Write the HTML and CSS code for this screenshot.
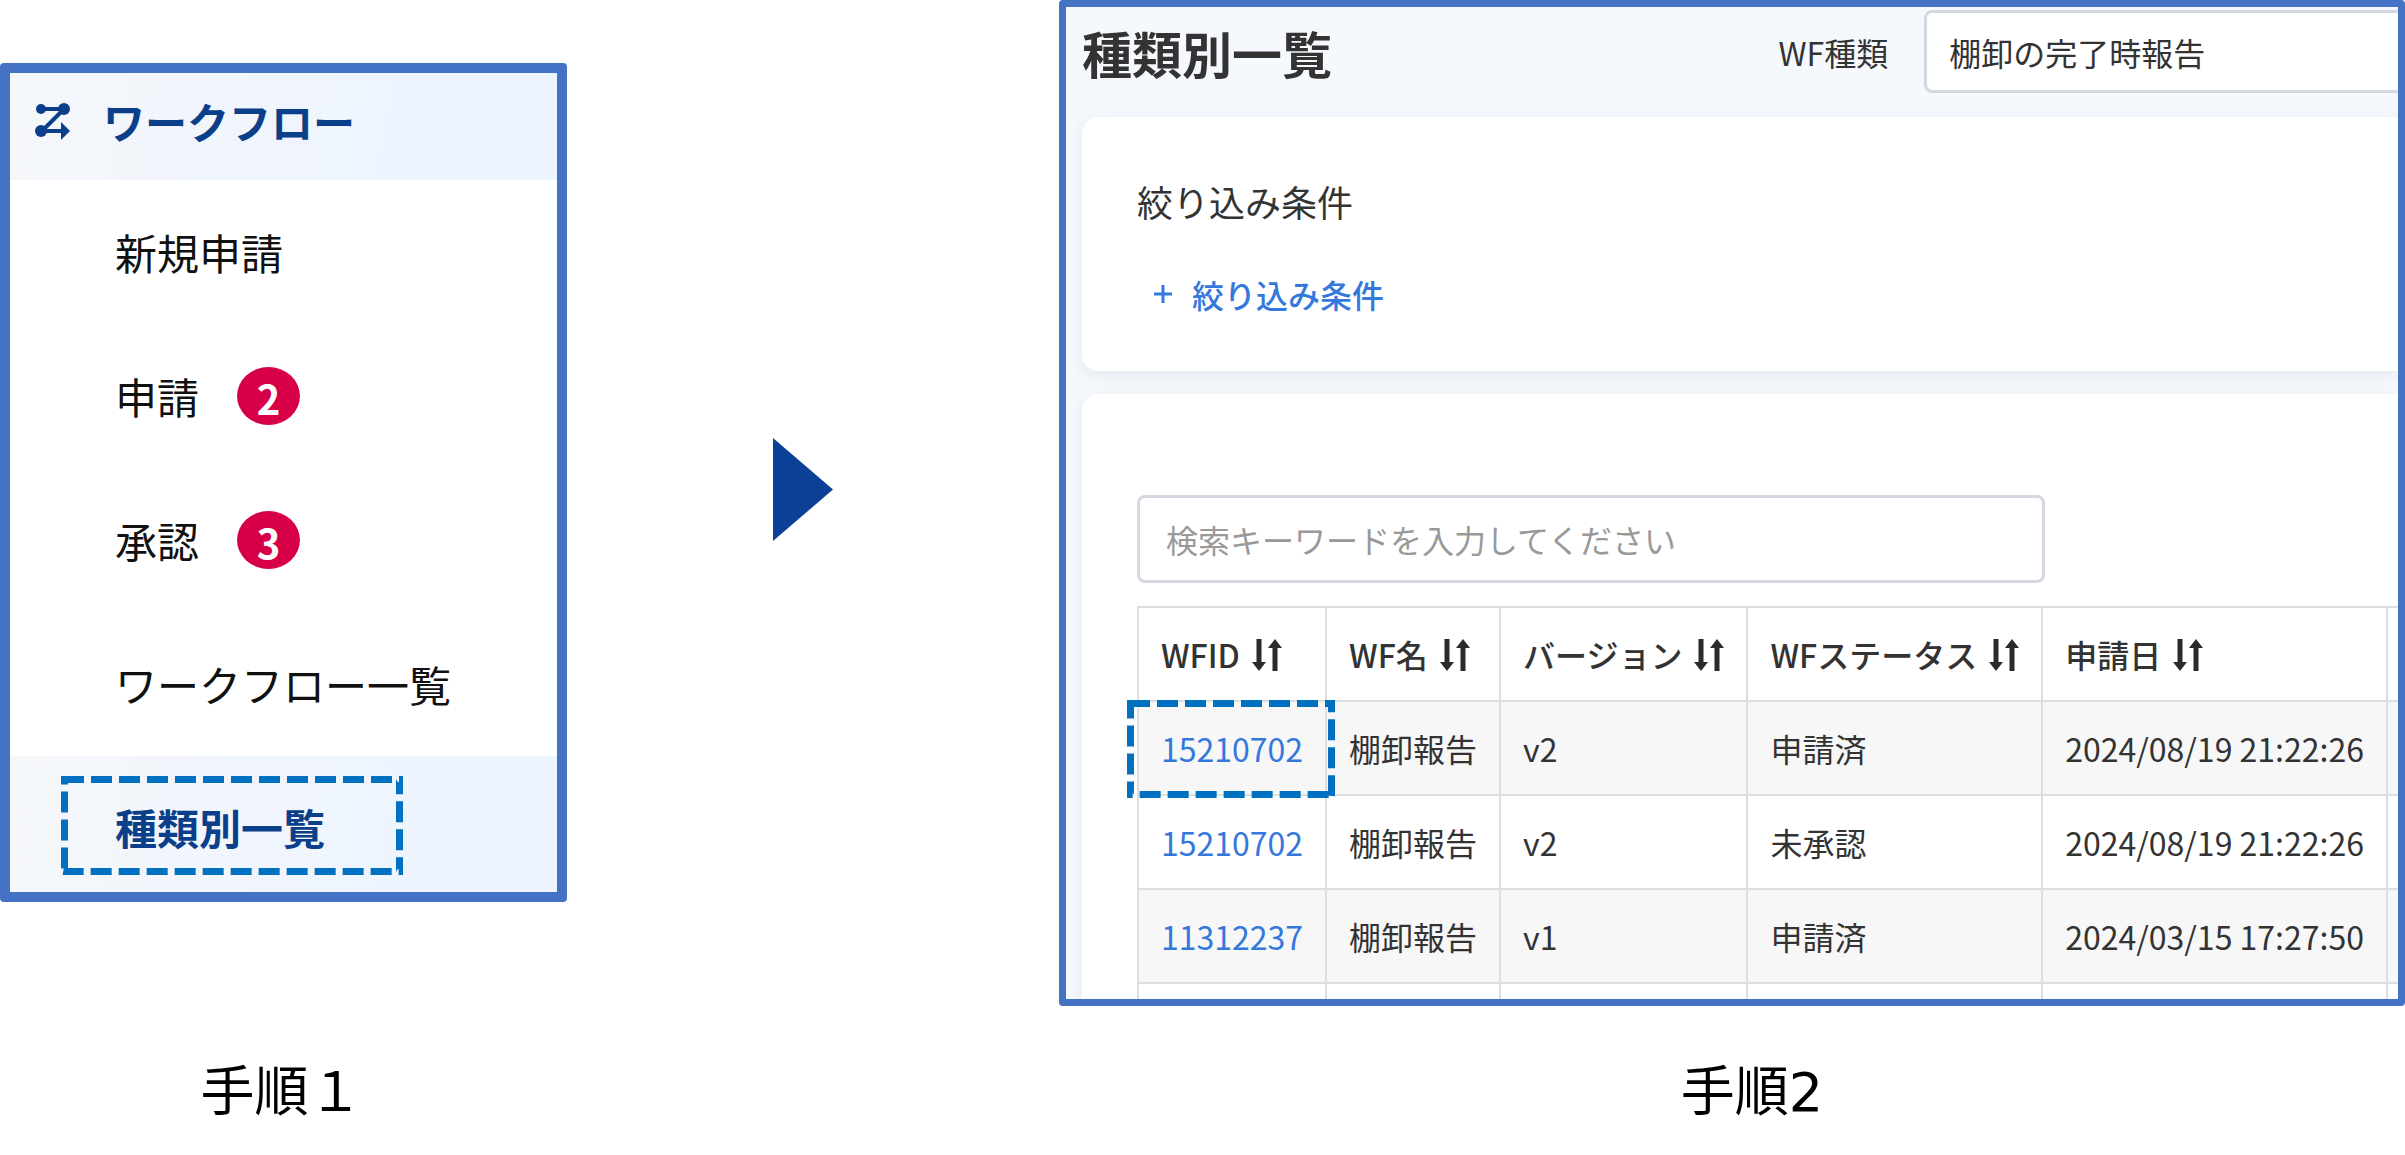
FILE: index.html
```html
<!DOCTYPE html>
<html lang="ja">
<head>
	<meta charset="utf-8">
	<title>種類別一覧</title>
	<link rel="stylesheet" href="styles.css">
</head>
<body>
	<svg class="defs" aria-hidden="true">
		<symbol id="sort" viewBox="0 0 30 32">
			<path d="M4.500 0h5v23h4.500L7 32 0 23h4.500zM20.500 32h5V9H30L23 0 16 9h4.500z"/>
		</symbol>
	</svg>
	<main class="steps">
		<nav class="panel menu">
			<div class="menu-title">
				<svg class="flow-icon" viewBox="0 0 34 36">
					<path class="line" d="M5 6h24M5 28h22M28 6L6 28"/>
					<circle cx="5" cy="6" r="5"/>
					<circle cx="28" cy="6" r="6"/>
					<circle cx="5" cy="28" r="6"/>
					<path d="M25 19l9 9-9 9z"/>
				</svg>
				<span>ワークフロー</span>
			</div>
			<ul class="menu-list">
				<li><a href="#">新規申請</a></li>
				<li><a href="#">申請<span class="badge">2</span></a></li>
				<li><a href="#">承認<span class="badge">3</span></a></li>
				<li><a href="#">ワークフロー一覧</a></li>
				<li class="active">
					<a href="#">種類別一覧</a>
					<svg class="mark mark-menu"><rect/></svg>
				</li>
			</ul>
		</nav>

		<svg class="arrow" viewBox="0 0 60 103"><path d="M0 0l60 51.500L0 103z"/></svg>

		<section class="panel list">
			<header class="list-head">
				<h1>種類別一覧</h1>
				<label for="kind">WF種類</label>
				<select id="kind">
					<option>棚卸の完了時報告</option>
				</select>
			</header>
			<div class="card filter">
				<h2>絞り込み条件</h2>
				<button type="button" class="add">
					<svg viewBox="0 0 18 18"><path d="M9 0v18M0 9h18"/></svg>
					絞り込み条件
				</button>
			</div>
			<div class="card result">
				<input type="text" class="search" aria-label="検索キーワード" placeholder="検索キーワードを入力してください">
				<table>
					<thead>
						<tr>
							<th>WFID<svg class="sort"><use href="#sort"/></svg></th>
							<th>WF名<svg class="sort"><use href="#sort"/></svg></th>
							<th>バージョン<svg class="sort"><use href="#sort"/></svg></th>
							<th>WFステータス<svg class="sort"><use href="#sort"/></svg></th>
							<th>申請日<svg class="sort"><use href="#sort"/></svg></th>
							<th class="rest"></th>
						</tr>
					</thead>
					<tbody>
						<tr>
							<td class="marked"><a href="#">15210702</a><svg class="mark mark-id"><rect/></svg></td>
							<td>棚卸報告</td>
							<td>v2</td>
							<td>申請済</td>
							<td>2024/08/19 21:22:26</td>
							<td class="rest"></td>
						</tr>
						<tr>
							<td><a href="#">15210702</a></td>
							<td>棚卸報告</td>
							<td>v2</td>
							<td>未承認</td>
							<td>2024/08/19 21:22:26</td>
							<td class="rest"></td>
						</tr>
						<tr>
							<td><a href="#">11312237</a></td>
							<td>棚卸報告</td>
							<td>v1</td>
							<td>申請済</td>
							<td>2024/03/15 17:27:50</td>
							<td class="rest"></td>
						</tr>
						<tr class="next">
							<td></td>
							<td></td>
							<td></td>
							<td></td>
							<td></td>
							<td class="rest"></td>
						</tr>
					</tbody>
				</table>
			</div>
		</section>

		<p class="caption caption-1">手順１</p>
		<p class="caption caption-2">手順2</p>
	</main>
</body>
</html>
```

FILE: styles.css
```css
* {
	box-sizing: border-box;
}

body {
	margin: 0;
	background: #fff;
	color: #333;
	font-family: "Noto Sans CJK JP", sans-serif;
	font-size: 32px;
	line-height: 48px;
}

h1, h2, p, ul {
	margin: 0;
	padding: 0;
}

a {
	text-decoration: none;
}

.defs {
	display: none;
}

.steps {
	display: grid;
	grid-template-columns: minmax(0, 567fr) minmax(0, 492fr) minmax(0, 1346fr);
}

.panel {
	border: 7px solid #4472c4;
	border-radius: 4px;
	overflow: hidden;
}

/* left menu */
.menu {
	align-self: start;
	margin-top: 63px;
	border-width: 10px;
	font-size: 42px;
}

.menu-title, .menu .active {
	background: linear-gradient(100deg, #f5f7fa, #f0f5fd 50%, #ebf4ff);
	color: #0b3f8a;
	font-weight: 700;
}

.menu-title {
	display: flex;
	align-items: center;
	gap: 33px;
	padding: 16px 26px 27px;
	line-height: 64px;
}

.flow-icon {
	width: 34px;
	height: 36px;
	overflow: visible;
	fill: #0b3f8a;
}

.flow-icon .line {
	fill: none;
	stroke: #0b3f8a;
	stroke-width: 4;
}

.menu-list {
	list-style: none;
}

.menu-list li {
	position: relative;
}

.menu-list a {
	display: flex;
	align-items: center;
	height: 144px;
	padding-left: 105px;
	color: #111;
}

.menu-list .active a {
	height: 136px;
	padding-top: 6px;
	color: inherit;
}

.badge {
	width: 63px;
	height: 58px;
	margin-left: 38px;
	border-radius: 50%;
	background: #d70048;
	color: #fff;
	font-size: 40px;
	font-weight: 700;
	line-height: 62px;
	text-align: center;
}

/* dashed frames */
.mark {
	position: absolute;
	pointer-events: none;
	overflow: hidden;
}

.mark rect {
	width: 100%;
	height: 100%;
	rx: 2px;
	fill: none;
	stroke: #0070c0;
	stroke-width: 14;
	stroke-dasharray: 21 7;
}

.mark-menu {
	left: 51px;
	top: 20px;
	width: 342px;
	height: 99px;
}

.arrow {
	place-self: center;
	width: 60px;
	height: 103px;
	margin-right: 20px;
	margin-bottom: 27px;
	fill: #0c4097;
}

/* right list */
.list {
	padding-left: 16px;
	background: #f5f8fd;
}

.list-head {
	display: flex;
	align-items: center;
	padding: 3px 0 24px;
}

h1 {
	font-size: 50px;
	font-weight: 700;
	line-height: 72px;
}

.list-head label {
	margin-left: auto;
	padding-right: 36px;
}

select, input, button {
	font: inherit;
	color: inherit;
}

select {
	appearance: none;
	width: 36%;
	height: 83px;
	padding: 0 22px;
	border: 3px solid #d3d8e1;
	border-right: 0;
	border-radius: 8px 0 0 8px;
	background: #fff;
}

.card {
	padding-left: 55px;
	border-radius: 16px 0 0 16px;
	background: #fff;
	box-shadow: 0 4px 16px rgba(40, 50, 70, 0.08);
}

.filter {
	margin-bottom: 23px;
	padding-top: 57px;
	padding-bottom: 53px;
}

h2 {
	font-size: 36px;
	font-weight: 400;
	line-height: 54px;
}

.add {
	display: flex;
	align-items: center;
	gap: 20px;
	margin: 42px 0 0 17px;
	padding: 0;
	border: 0;
	background: none;
	color: #3578dc;
	font-weight: 500;
}

.add svg {
	width: 18px;
	height: 18px;
	stroke: #3578dc;
	stroke-width: 3;
}

.result {
	padding-top: 101px;
	border-bottom-left-radius: 0;
}

.search {
	display: block;
	width: 72%;
	height: 88px;
	padding: 0 26px;
	border: 3px solid #d3d8e1;
	border-radius: 8px;
	background: #fff;
}

.search::placeholder {
	color: #999;
	opacity: 1;
}

table {
	width: 100%;
	margin-top: 23px;
	border-collapse: collapse;
	white-space: nowrap;
}

th, td {
	height: 94px;
	padding: 0 22px;
	border: 2px solid #dedede;
	text-align: left;
}

th {
	font-weight: 500;
}

td a {
	color: #3578dc;
}

tbody tr:nth-child(odd) {
	background: #f7f7f7;
}

.rest {
	width: 100%;
	padding: 0;
	border-right: 0;
}

.next, tbody .next {
	background: #fff;
}

.next td {
	height: 16px;
	border-bottom: 0;
}

.sort {
	width: 30px;
	height: 32px;
	margin-left: 12px;
	vertical-align: -3px;
	fill: #2b2b2b;
}

.marked {
	position: relative;
}

.mark-id {
	left: -12px;
	top: -2px;
	width: 208px;
	height: 98px;
}

/* captions */
.caption {
	padding-top: 51px;
	color: #000;
	font-family: "DejaVu Sans", "Noto Sans CJK JP", sans-serif;
	font-size: 54px;
	line-height: 72px;
	text-align: center;
}

.caption-1 {
	grid-column: 1;
	padding-right: 4px;
}

.caption-2 {
	grid-column: 3;
	padding-left: 40px;
}
```
